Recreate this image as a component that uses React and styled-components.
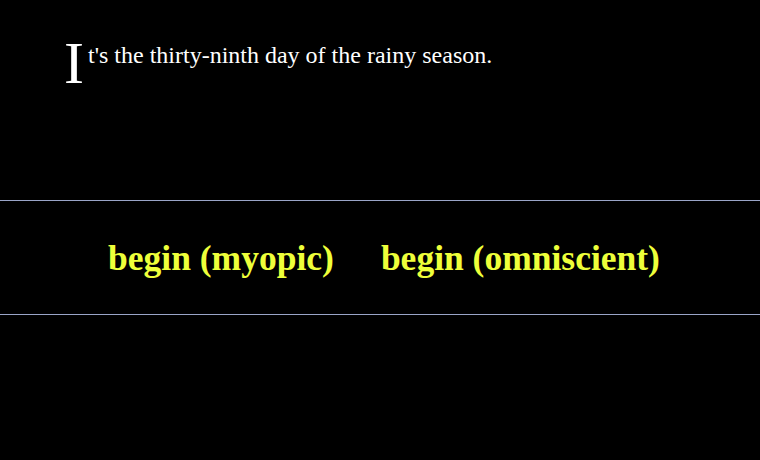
import React from 'react';
import styled, { createGlobalStyle } from 'styled-components';

const GlobalStyle = createGlobalStyle`
  html, body {
    margin: 0;
    padding: 0;
    background: #000;
  }
  body {
    font-family: "Liberation Serif", "Times New Roman", serif;
    color: #fff;
  }
`

const Page = styled.div`
  width: 760px;
  height: 460px;
  background: #000;
  overflow: hidden;
`

const Intro = styled.p`
  margin: 0;
  padding: 41px 64px 0 64px;
  height: 200px;
  box-sizing: border-box;
  font-size: 24px;
  line-height: 28px;
  color: #fff;
`

const DropCap = styled.span`
  float: left;
  font-size: 60px;
  line-height: 52px;
  margin-right: 4px;
  margin-top: -4px;
`

const Choices = styled.nav`
  display: flex;
  justify-content: center;
  align-items: center;
  gap: 47px;
  height: 113px;
  border-top: 1px solid #9aa5c8;
  border-bottom: 1px solid #9aa5c8;
  padding: 0 0 0 8px;
  box-sizing: content-box;
`

const Choice = styled.a`
  font-size: 35.5px;
  font-weight: bold;
  color: #eeff3a;
  text-decoration: none;
  cursor: pointer;
`

export default function App() {
  return (
    <Page>
      <GlobalStyle />
      <Intro>
        <DropCap>I</DropCap>t's the thirty-ninth day of the rainy season.
      </Intro>
      <Choices>
        <Choice>begin (myopic)</Choice>
        <Choice>begin (omniscient)</Choice>
      </Choices>
    </Page>
  )
}
